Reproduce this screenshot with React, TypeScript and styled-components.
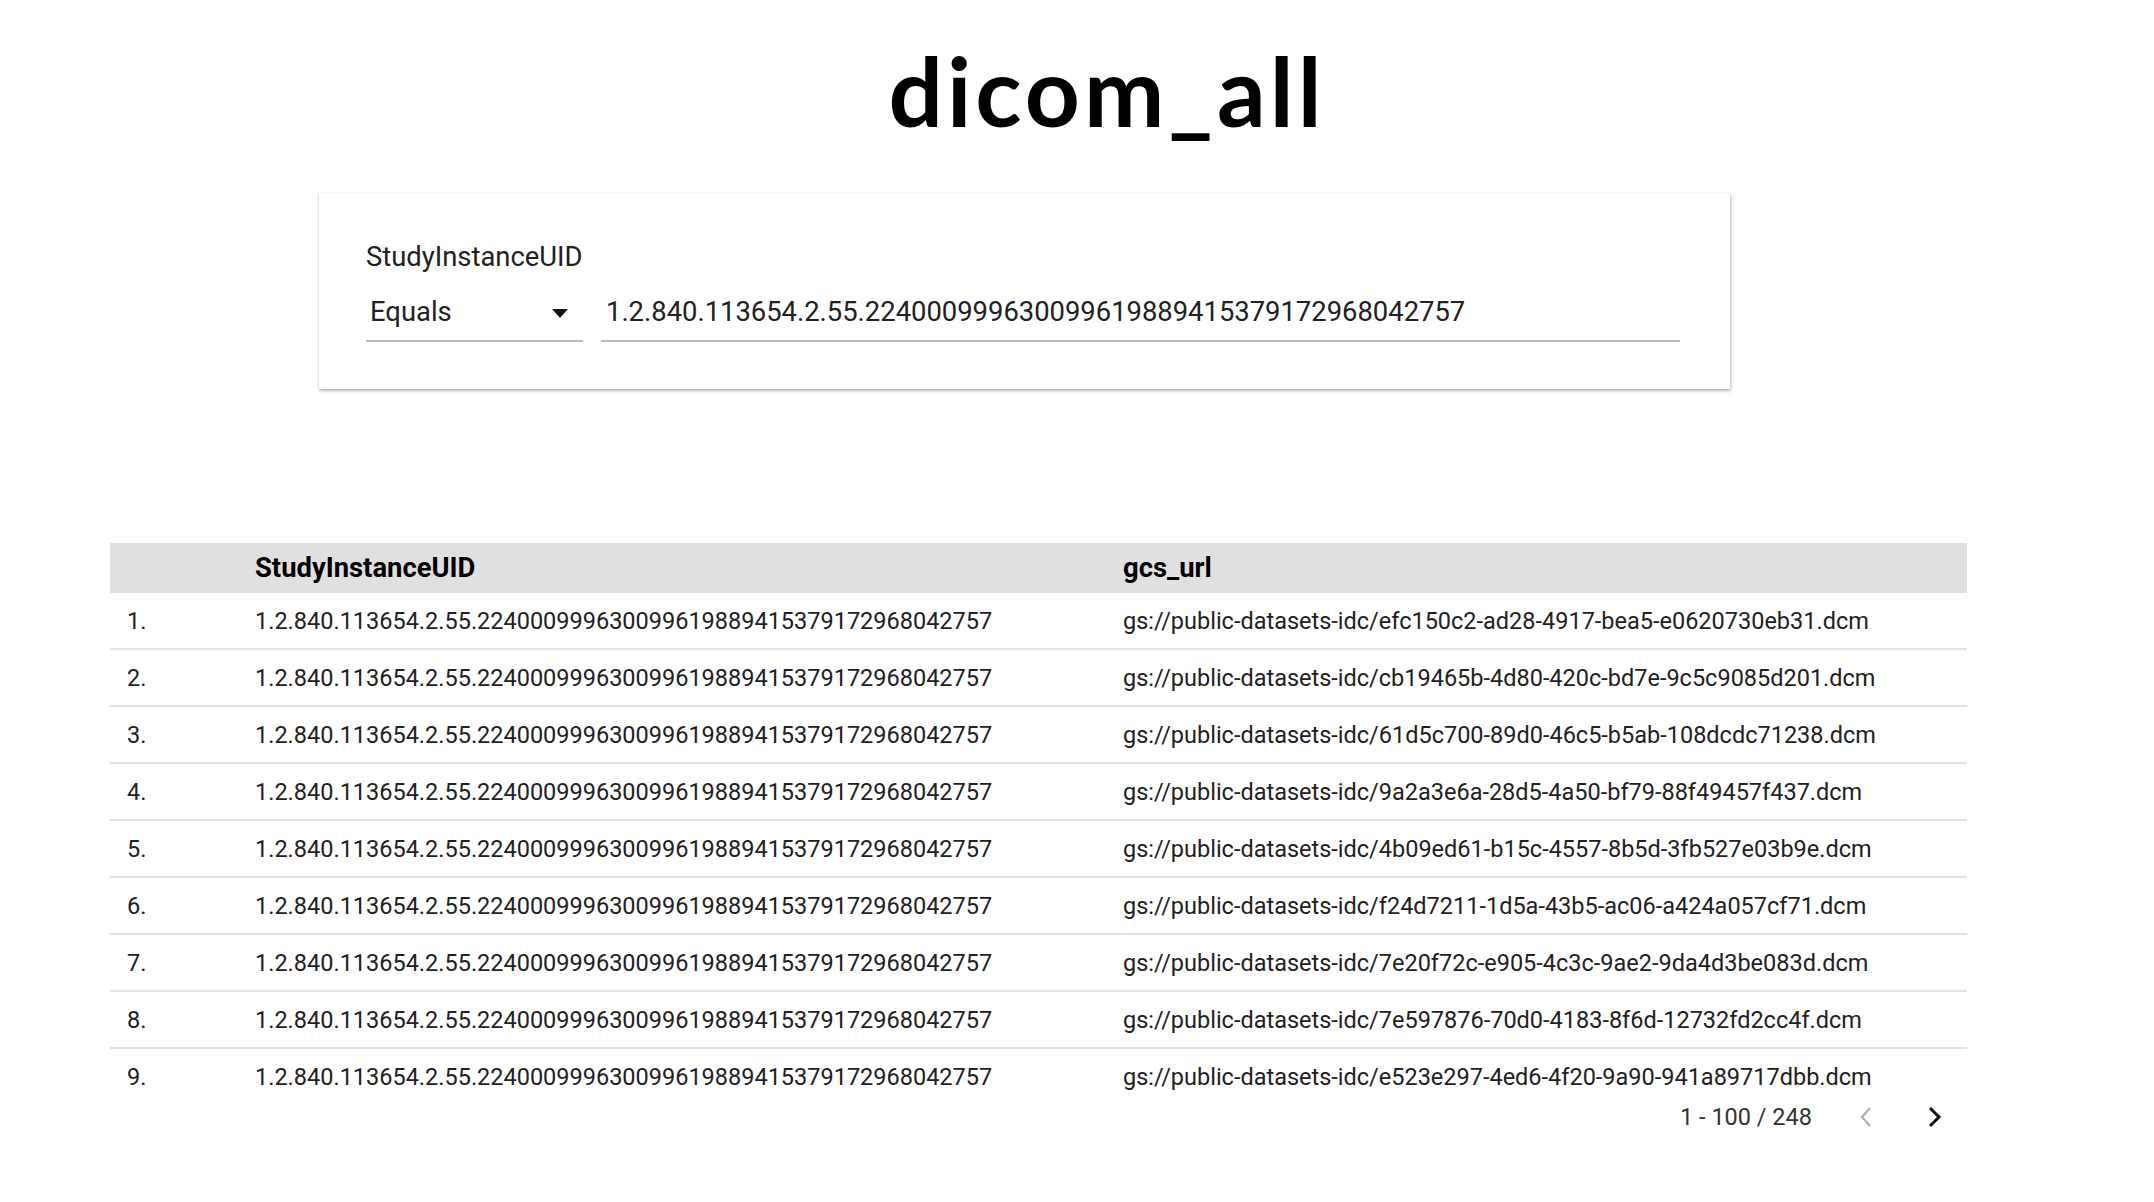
import React from "react";
import styled, { createGlobalStyle } from "styled-components";

const GlobalStyle = createGlobalStyle`
  html, body { margin: 0; padding: 0; background: #ffffff; }
  body { font-family: Roboto, "Liberation Sans", sans-serif; color: #212121; }
`;

const Page = styled.div`
  width: 2154px;
  height: 1202px;
  display: flex;
  flex-direction: column;
  overflow: hidden;
`;

const Title = styled.h1`
  margin: 25px 0 0 0;
  padding-left: 60px;
  text-align: center;
  font-family: Lato, "Open Sans", sans-serif;
  font-weight: 700;
  font-size: 96px;
  line-height: 130px;
  color: #000;
  letter-spacing: 4px;
`;

const FilterCard = styled.section`
  margin: 38px 0 0 319px;
  width: 1411px;
  height: 196px;
  box-sizing: border-box;
  padding: 48px 50px 0 47px;
  background: #fff;
  box-shadow: 0 1px 2px rgba(0, 0, 0, 0.18), 1px 2px 4px rgba(0, 0, 0, 0.22);
  display: flex;
  flex-direction: column;
  gap: 23px;
`;

const FieldLabel = styled.div`
  font-size: 27.4px;
  line-height: 32px;
  color: #212121;
`;

const Controls = styled.div`
  display: flex;
  gap: 18px;
`;

const Select = styled.div`
  width: 217px;
  flex: none;
  box-sizing: border-box;
  display: flex;
  align-items: center;
  justify-content: space-between;
  padding: 0 15px 12px 4px;
  border-bottom: 2px solid #bdbdbd;
  font-size: 27.4px;
  line-height: 32px;
`;

const Caret = styled.span`
  width: 0;
  height: 0;
  border-left: 8px solid transparent;
  border-right: 8px solid transparent;
  border-top: 9px solid #111;
  margin-top: 2px;
`;

const TextInput = styled.div`
  flex: 1;
  padding: 0 0 12px 5px;
  border-bottom: 2px solid #bdbdbd;
  font-size: 27.4px;
  line-height: 32px;
  color: #212121;
`;

const TableWrap = styled.div`
  margin: 154px 0 0 110px;
  width: 1857px;
  display: flex;
  flex-direction: column;
`;

const TableBody = styled.div`
  height: 507px;
  overflow: hidden;
`;

const Row = styled.div<{ $header?: boolean }>`
  display: grid;
  grid-template-columns: 145px 868px 1fr;
  align-items: center;
  height: ${(p) => (p.$header ? "50px" : "57px")};
  box-sizing: border-box;
  background: ${(p) => (p.$header ? "#e0e0e0" : "#fff")};
  border-bottom: ${(p) => (p.$header ? "none" : "2px solid #e2e2e2")};
  font-size: ${(p) => (p.$header ? "27.4px" : "23.5px")};
  font-weight: ${(p) => (p.$header ? 700 : 400)};
  color: ${(p) => (p.$header ? "#000" : "#212121")};
`;

const Cell = styled.div<{ $index?: boolean }>`
  padding-left: ${(p) => (p.$index ? "17px" : "0")};
  white-space: nowrap;
  overflow: hidden;
`;

const Pager = styled.div`
  display: flex;
  align-items: center;
  justify-content: flex-end;
  height: 34px;
  padding-right: 8px;
`;

const PagerText = styled.span`
  font-size: 23.5px;
  color: #333;
  margin-right: 30px;
`;

const PagerButton = styled.button<{ $disabled?: boolean }>`
  width: 48px;
  height: 34px;
  border: none;
  background: transparent;
  padding: 0;
  display: flex;
  align-items: center;
  justify-content: center;
  color: ${(p) => (p.$disabled ? "#b0b0b0" : "#111")};
  & + & { margin-left: 21px; }
`;

const uid = "1.2.840.113654.2.55.224000999630099619889415379172968042757";
const urls = [
  "gs://public-datasets-idc/efc150c2-ad28-4917-bea5-e0620730eb31.dcm",
  "gs://public-datasets-idc/cb19465b-4d80-420c-bd7e-9c5c9085d201.dcm",
  "gs://public-datasets-idc/61d5c700-89d0-46c5-b5ab-108dcdc71238.dcm",
  "gs://public-datasets-idc/9a2a3e6a-28d5-4a50-bf79-88f49457f437.dcm",
  "gs://public-datasets-idc/4b09ed61-b15c-4557-8b5d-3fb527e03b9e.dcm",
  "gs://public-datasets-idc/f24d7211-1d5a-43b5-ac06-a424a057cf71.dcm",
  "gs://public-datasets-idc/7e20f72c-e905-4c3c-9ae2-9da4d3be083d.dcm",
  "gs://public-datasets-idc/7e597876-70d0-4183-8f6d-12732fd2cc4f.dcm",
  "gs://public-datasets-idc/e523e297-4ed6-4f20-9a90-941a89717dbb.dcm",
];

export default function App() {
  return (
    <>
      <GlobalStyle />
      <Page>
        <Title>dicom_all</Title>
        <FilterCard>
          <FieldLabel>StudyInstanceUID</FieldLabel>
          <Controls>
            <Select>
              <span>Equals</span>
              <Caret />
            </Select>
            <TextInput>{uid}</TextInput>
          </Controls>
        </FilterCard>
        <TableWrap>
          <Row $header>
            <Cell $index />
            <Cell>StudyInstanceUID</Cell>
            <Cell>gcs_url</Cell>
          </Row>
          <TableBody>
            {urls.map((u, i) => (
              <Row key={u}>
                <Cell $index>{i + 1}.</Cell>
                <Cell>{uid}</Cell>
                <Cell>{u}</Cell>
              </Row>
            ))}
          </TableBody>
          <Pager>
            <PagerText>1 - 100 / 248</PagerText>
            <PagerButton $disabled aria-label="previous">
              <svg width="14" height="22" viewBox="0 0 14 22">
                <polyline points="11,2 3,11 11,20" fill="none" stroke="currentColor" strokeWidth="2.2" />
              </svg>
            </PagerButton>
            <PagerButton aria-label="next">
              <svg width="16" height="22" viewBox="0 0 16 22">
                <polyline points="3,2 12,11 3,20" fill="none" stroke="currentColor" strokeWidth="3" />
              </svg>
            </PagerButton>
          </Pager>
        </TableWrap>
      </Page>
    </>
  );
}
